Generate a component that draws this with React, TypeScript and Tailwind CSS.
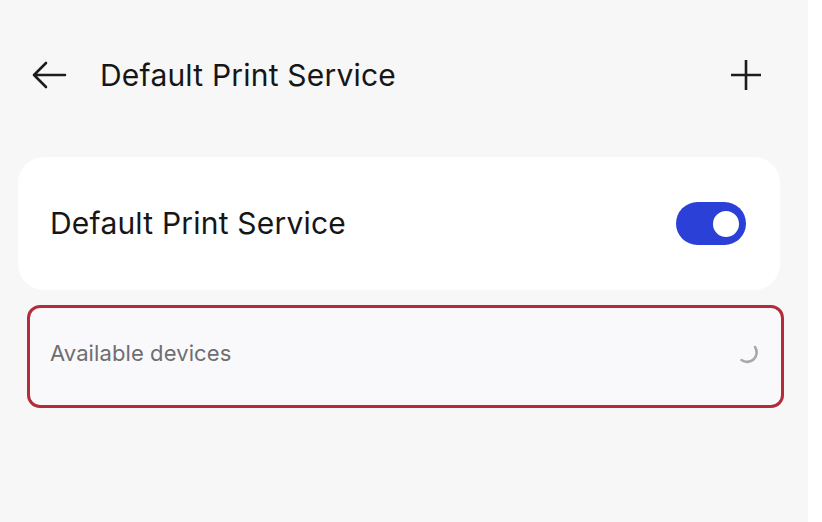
import React from 'react'

const font = { fontFamily: 'Inter, "Noto Sans", sans-serif' }

function BackArrow() {
  return (
    <svg width="36" height="30" viewBox="0 0 36 30" fill="none">
      <path
        d="M34 15H3M15 3L3 15l12 12"
        stroke="#1c1c1c"
        strokeWidth="2.6"
        strokeLinecap="round"
        strokeLinejoin="round"
      />
    </svg>
  )
}

function PlusIcon() {
  return (
    <svg width="34" height="34" viewBox="0 0 34 34" fill="none">
      <path d="M17 2v30M2 17h30" stroke="#1c1c1c" strokeWidth="2.6" />
    </svg>
  )
}

function Toggle() {
  return (
    <div className="flex h-[43px] w-[70px] items-center justify-end rounded-full bg-[#2b40d6] pr-[4px]">
      <div className="h-[32px] w-[32px] rounded-full border-[3px] border-[#2b40d6] bg-white" />
    </div>
  )
}

function Spinner() {
  return (
    <svg width="26" height="26" viewBox="0 0 26 26" fill="none">
      <path
        d="M20 6a9.5 9.5 0 0 1-13.5 13"
        stroke="#a8a8a8"
        strokeWidth="2.6"
        strokeLinecap="round"
      />
    </svg>
  )
}

export default function App() {
  return (
    <div className="flex h-[522px] w-[822px] bg-white" style={font}>
      <div className="flex w-[808px] flex-col bg-[#f7f7f7]">
        <header className="mt-[48px] flex h-[54px] items-center pl-[31px] pr-[45px]">
          <BackArrow />
          <h1 className="ml-[33px] flex-1 text-[30px] font-normal tracking-[0.2px] text-[#161616]">
            Default Print Service
          </h1>
          <PlusIcon />
        </header>

        <section className="ml-[18px] mt-[55px] flex h-[133px] w-[762px] items-center justify-between rounded-[26px] bg-white pl-[32px] pr-[34px]">
          <span className="text-[30px] tracking-[0.2px] text-[#161616]">Default Print Service</span>
          <Toggle />
        </section>

        <section className="ml-[27px] mt-[15px] flex h-[103px] w-[757px] items-start justify-between rounded-[13px] border-[3px] border-[#b42b3a] bg-[#f9f9fb] pl-[20px] pr-[20px] pt-[29px]">
          <span className="text-[22px] tracking-[0.1px] text-[#6e6e70]">Available devices</span>
          <div className="mt-[4px]">
            <Spinner />
          </div>
        </section>
      </div>
    </div>
  )
}
